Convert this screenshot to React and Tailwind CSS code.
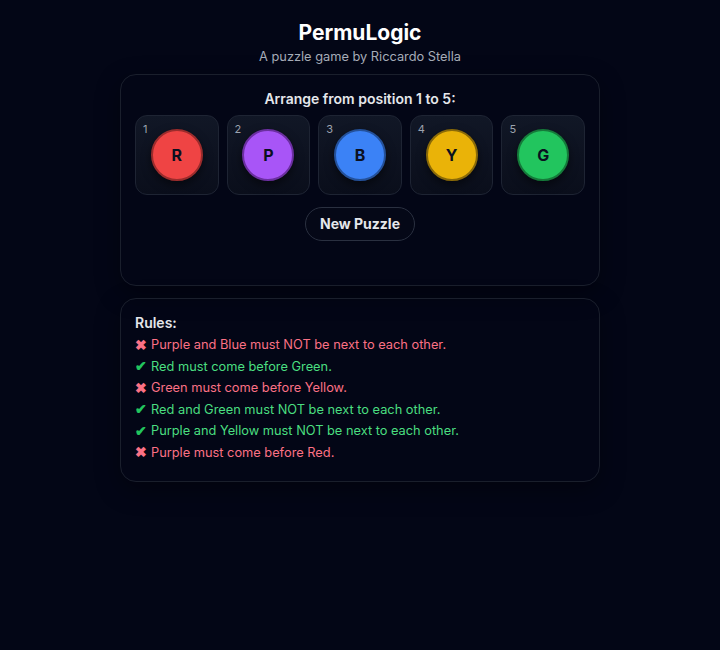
import React from "react"

const pieces = [
    { id: 1, letter: "R", color: "bg-[#ef4444]", ring: "border-[#9b2c2c]" },
    { id: 2, letter: "P", color: "bg-[#a855f7]", ring: "border-[#6b2fa0]" },
    { id: 3, letter: "B", color: "bg-[#3b82f6]", ring: "border-[#24519a]" },
    { id: 4, letter: "Y", color: "bg-[#eab308]", ring: "border-[#8a6a08]" },
    { id: 5, letter: "G", color: "bg-[#22c55e]", ring: "border-[#157a3a]" },
]

const rules = [
    { ok: false, text: "Purple and Blue must NOT be next to each other." },
    { ok: true, text: "Red must come before Green." },
    { ok: false, text: "Green must come before Yellow." },
    { ok: true, text: "Red and Green must NOT be next to each other." },
    { ok: true, text: "Purple and Yellow must NOT be next to each other." },
    { ok: false, text: "Purple must come before Red." },
]

const Slot = ({ piece }) => (
    <div className="relative h-20 flex items-center justify-center rounded-xl border border-[#1e2433] bg-gradient-to-b from-[#111726] to-[#0a0e1b]">
        <span className="absolute left-[7px] top-[5px] text-[11px] text-[#9ca3af]">{piece.id}</span>
        <div className={`w-[52px] h-[52px] rounded-full border-2 flex items-center justify-center shadow-[0_4px_10px_rgba(0,0,0,0.5)] ${piece.color} ${piece.ring}`}>
            <span className="text-base font-bold text-[#0b1020]">{piece.letter}</span>
        </div>
    </div>
)

const App = () => {
    return (
        <div className="min-h-[650px] bg-[#030616] text-white font-['Inter',sans-serif] pt-[19px]">
            <div className="w-[480px] mx-auto flex flex-col">
                <h1 className="text-[21px] font-bold text-center leading-7">PermuLogic</h1>
                <p className="text-[12.8px] text-[#a7adb9] text-center leading-5">A puzzle game by Riccardo Stella</p>

                <div className="mt-[7px] h-[212px] border border-[#1a1f2c] rounded-2xl p-3.5 pt-[14px] flex flex-col items-center shadow-[0_8px_24px_rgba(0,0,0,0.35)]">
                    <p className="text-sm font-semibold text-[#e5e7eb] leading-5">Arrange from position 1 to 5:</p>
                    <div className="w-full grid grid-cols-5 gap-[8px] mt-[6px]">
                        {pieces.map(p => <Slot key={p.id} piece={p} />)}
                    </div>
                    <button className="mt-3 h-[34px] px-[14px] rounded-full border border-[#2a3040] bg-[#050817] text-sm font-bold text-[#e5e7eb]">
                        New Puzzle
                    </button>
                </div>

                <div className="mt-3 border border-[#1a1f2c] rounded-2xl px-3.5 pt-[14px] pb-[18px] shadow-[0_8px_24px_rgba(0,0,0,0.35)]">
                    <p className="text-sm font-semibold text-[#e5e7eb] leading-5">Rules:</p>
                    <ul className="mt-[1px]">
                        {rules.map((r, i) => (
                            <li key={i} className={`text-[12.8px] leading-[21.5px] flex items-center gap-[4px] ${r.ok ? "text-[#4ade80]" : "text-[#fb7185]"}`}>
                                <span className={`w-[12px] text-[14px] font-bold leading-none ${r.ok ? "text-[#22c55e]" : "text-[#fb7185]"}`}>{r.ok ? "✔" : "✖"}</span>
                                <span>{r.text}</span>
                            </li>
                        ))}
                    </ul>
                </div>
            </div>
        </div>
    )
}

export default App
